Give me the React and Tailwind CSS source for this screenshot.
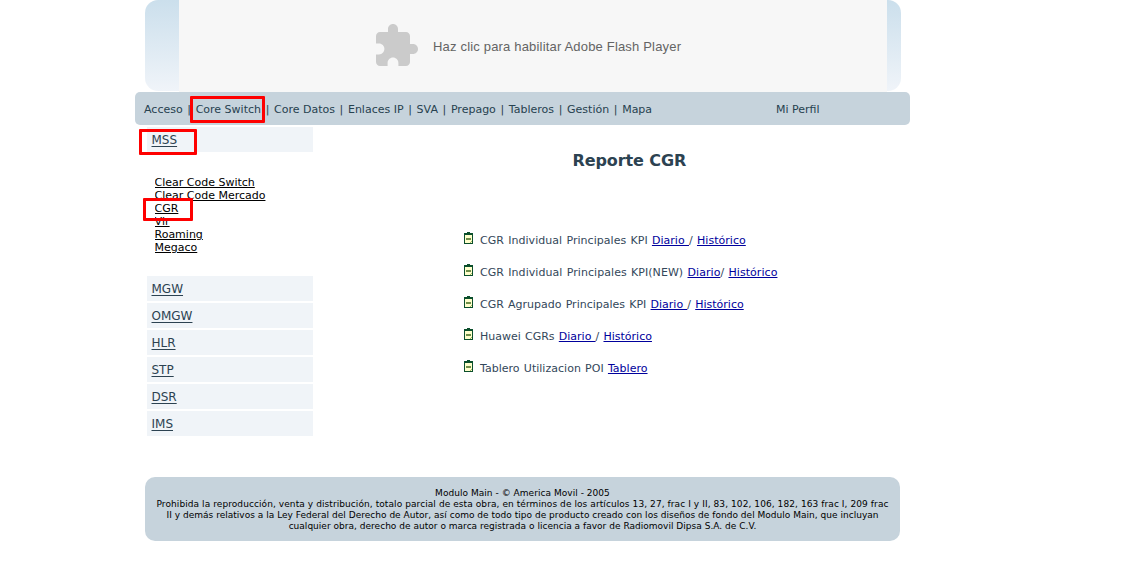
import React from 'react';

const NAV = ['Acceso', 'Core Switch', 'Core Datos', 'Enlaces IP', 'SVA', 'Prepago', 'Tableros', 'Gestión', 'Mapa'];
const SUBMENU = ['Clear Code Switch', 'Clear Code Mercado', 'CGR', 'Vlr', 'Roaming', 'Megaco'];
const SECTIONS = ['MGW', 'OMGW', 'HLR', 'STP', 'DSR', 'IMS'];
const REPORTS = [
  { label: 'CGR Individual Principales KPI', links: ['Diario ', 'Histórico'], tracking: 'tracking-[0.04px]' },
  { label: 'CGR Individual Principales KPI(NEW)', links: ['Diario', 'Histórico'], tracking: 'tracking-[0.06px]' },
  { label: 'CGR Agrupado Principales KPI', links: ['Diario ', 'Histórico'], tracking: 'tracking-normal' },
  { label: 'Huawei CGRs', links: ['Diario ', 'Histórico'], tracking: 'tracking-normal' },
  { label: 'Tablero Utilizacion POI', links: ['Tablero'], tracking: 'tracking-[0.02px]' },
];

function PuzzleIcon() {
  return (
    <svg className="h-12 w-12 shrink-0" viewBox="0 0 24 24" fill="#cbcbcb">
      <path d="M20.5 11H19V7c0-1.1-.9-2-2-2h-4V3.5C13 2.12 11.88 1 10.5 1S8 2.12 8 3.5V5H4c-1.1 0-1.99.9-1.99 2v3.8H3.5c1.49 0 2.7 1.21 2.7 2.7s-1.21 2.7-2.7 2.7H2V20c0 1.1.9 2 2 2h3.8v-1.5c0-1.49 1.21-2.7 2.7-2.7 1.49 0 2.7 1.21 2.7 2.7V22H17c1.1 0 2-.9 2-2v-4h1.5c1.38 0 2.5-1.12 2.5-2.5S21.88 11 20.5 11z" />
    </svg>
  );
}

function ReportIcon() {
  return (
    <svg className="h-3 w-[9px] shrink-0" viewBox="0 0 9 12" shapeRendering="crispEdges">
      <path fill="#0b4f2c" d="M0 1h9v11H0z" />
      <path fill="#0b4f2c" d="M3 0h3v1H3z" />
      <path fill="#ffffcc" d="M1 3h7v8H1z" />
      <path fill="#6f8f4a" d="M2 6h5v2H2z" />
      <path fill="#a5b96a" d="M6 10h1v1H6zM7 9h1v1H7z" />
    </svg>
  );
}

function Section({ name }) {
  return (
    <div className="h-[25px] bg-[#f0f4f8] pl-[4.5px] pt-px text-[12px] leading-[25px] text-[#2c4251]">
      <a className="underline underline-offset-2">{name}</a>
    </div>
  );
}

export default function App() {
  return (
    <div className="h-[572px] overflow-hidden bg-white font-['DejaVu_Sans',sans-serif] text-[11px]">
      <div className="relative ml-[135px] w-[775px]">
        <header className="ml-2.5 h-[92px] w-[756px]">
          <div className="h-[91px] rounded-[13px] bg-linear-to-b from-[#cbdfec] to-[#f0f4f9] pl-[34px]">
            <div className="flex h-[92px] w-[708px] items-center bg-[#f7f7f7] pl-[193px] font-['Liberation_Sans',sans-serif] text-[13px] tracking-[0.18px] text-[#646464]">
              <PuzzleIcon />
              <span className="ml-[13px] whitespace-nowrap pt-0.5">Haz clic para habilitar Adobe Flash Player</span>
            </div>
          </div>
        </header>

        <nav className="flex h-[33px] items-center rounded-[5px] bg-[#c6d3dc] pl-[9px] pt-[3px] text-[#27414f]">
          <div className="flex w-[632px] whitespace-nowrap">
            {NAV.map((item, i) => (
              <React.Fragment key={item}>
                {i > 0 && <span className="w-[13px] text-center">|</span>}
                <span>{item}</span>
              </React.Fragment>
            ))}
          </div>
          <span>Mi Perfil</span>
        </nav>

        <div className="flex h-[352px] pt-0.5">
          <aside className="ml-3 w-[166px]">
            <Section name="MSS" />
            <ul className="h-[124px] pl-[7.5px] pt-6 leading-[13px] text-black">
              {SUBMENU.map((item) => (
                <li key={item} className="h-[13px] overflow-hidden whitespace-nowrap">
                  <a className="underline underline-offset-1">{item}</a>
                </li>
              ))}
            </ul>
            <div className="flex flex-col gap-0.5">
              {SECTIONS.map((name) => (
                <Section key={name} name={name} />
              ))}
            </div>
          </aside>

          <main className="pl-[151px] text-[#33475a]">
            <h1 className="ml-[108.5px] pt-[23px] text-[16px] font-bold leading-[22px] tracking-[-0.1px] text-[#2c4251]">Reporte CGR</h1>
            <ul className="mt-[60px]">
              {REPORTS.map(({ label, links, tracking }) => (
                <li key={label} className="flex h-8 gap-[7px] whitespace-pre leading-4">
                  <ReportIcon />
                  <span className={`pt-px [word-spacing:0.7px] ${tracking}`}>
                    {label}{' '}
                    {links.map((link, i) => (
                      <React.Fragment key={link}>
                        {i > 0 && '/ '}
                        <a className="text-[#00009c] underline underline-offset-1">{link}</a>
                      </React.Fragment>
                    ))}
                  </span>
                </li>
              ))}
            </ul>
          </main>
        </div>

        <footer className="ml-2.5 h-16 w-[755px] whitespace-nowrap rounded-[10px] bg-[#c6d3dc] pt-[11px] text-center text-[9px] leading-[11px] text-black">
          <p className="tracking-[0.04px]">Modulo Main - © America Movil - 2005</p>
          <p className="tracking-[0.08px]">Prohibida la reproducción, venta y distribución, totalo parcial de esta obra, en términos de los artículos 13, 27, frac I y II, 83, 102, 106, 182, 163 frac I, 209 frac</p>
          <p className="tracking-[0.02px]">II y demás relativos a la Ley Federal del Derecho de Autor, así como de todo tipo de producto creado con los diseños de fondo del Modulo Main, que incluyan</p>
          <p className="tracking-[0.02px]">cualquier obra, derecho de autor o marca registrada o licencia a favor de Radiomovil Dipsa S.A. de C.V.</p>
        </footer>

        <div className="absolute left-[55px] top-24 h-[27px] w-[75px] rounded-[1px] border-3 border-[#fe0000]" />
        <div className="absolute left-1 top-[129px] h-[26px] w-[58px] rounded-[1px] border-3 border-[#fe0000]" />
        <div className="absolute left-2 top-[198px] h-[23px] w-[50px] rounded-[1px] border-3 border-[#fe0000]" />
      </div>
    </div>
  );
}
